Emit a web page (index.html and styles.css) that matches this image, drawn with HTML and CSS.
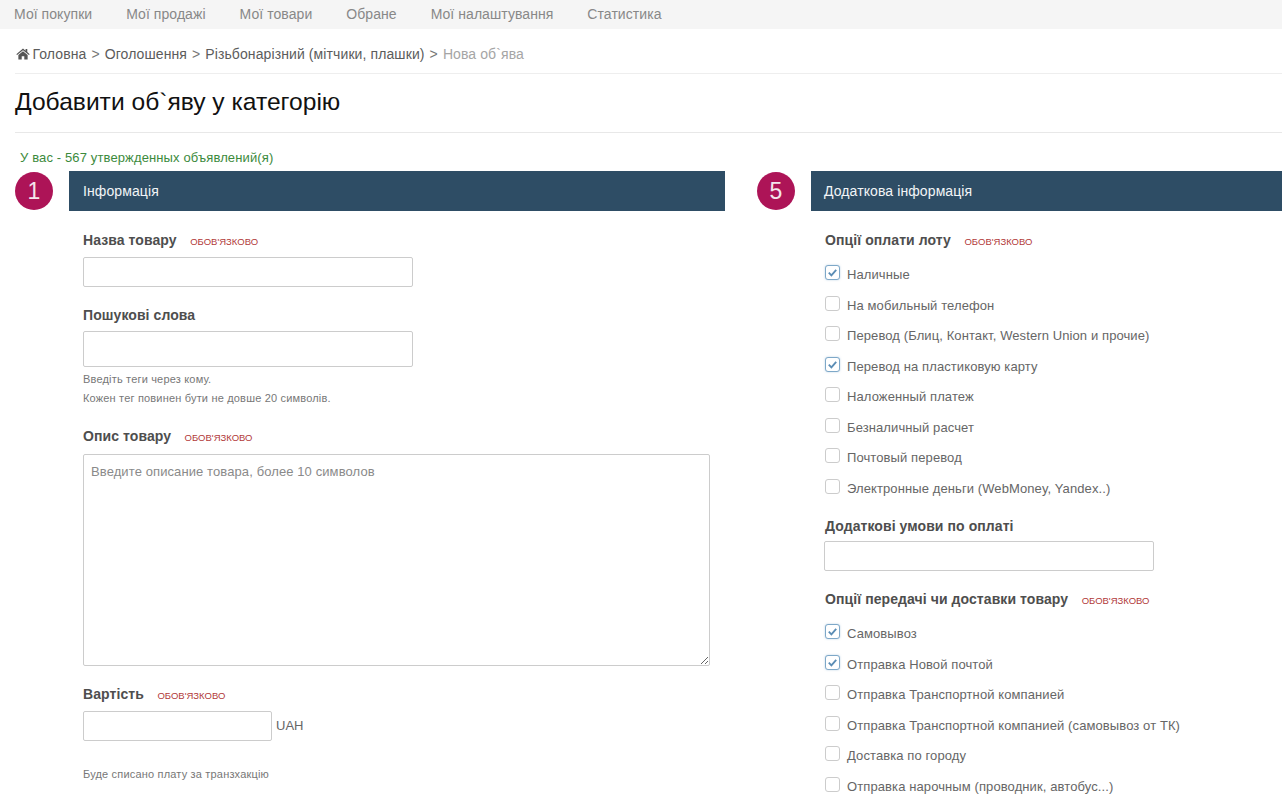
FILE: index.html
```html
<!DOCTYPE html>
<html lang="uk">
<head>
<meta charset="utf-8">
<title>Нова об`ява</title>
<link rel="stylesheet" href="styles.css">
</head>
<body>
<nav class="topnav">
  <a>Мої покупки</a><a>Мої продажі</a><a>Мої товари</a><a>Обране</a><a>Мої налаштування</a><a>Статистика</a>
</nav>
<main class="page">
  <div class="crumbs">
    <svg class="home" viewBox="0 0 16 14" width="14" height="12"><path d="M8 0.6 L0.2 7.2 L1.1 8.3 L8 2.6 L14.9 8.3 L15.8 7.2 L13 4.8 V1.2 H11 V3.1 Z M8 3.8 L2.6 8.3 V13.4 H6.5 V9.6 H9.5 V13.4 H13.4 V8.3 Z" fill="#555"/></svg>
    <span>Головна</span><i>&gt;</i><span>Оголошення</span><i>&gt;</i><span>Різьбонарізний (мітчики, плашки)</span><i>&gt;</i><span class="cur">Нова об`ява</span>
  </div>
  <h1>Добавити об`яву у категорію</h1>
  <p class="count">У вас - 567 утвержденных объявлений(я)</p>
  <div class="cols">
    <section class="col col-left">
      <div class="sec-head"><span class="num">1</span><h2>Інформація</h2></div>
      <div class="body">
        <div class="lbl lbl-name"><b>Назва товару</b><em>обов'язково</em></div>
        <input class="inp inp-name" type="text">
        <div class="lbl lbl-tags"><b>Пошукові слова</b></div>
        <input class="inp inp-tags" type="text">
        <p class="hint hint-a">Введіть теги через кому.</p>
        <p class="hint hint-b">Кожен тег повинен бути не довше 20 символів.</p>
        <div class="lbl lbl-desc"><b>Опис товару</b><em class="tight">обов'язково</em></div>
        <textarea class="area" placeholder="Введите описание товара, более 10 символов"></textarea>
        <div class="lbl lbl-price"><b>Вартість</b><em class="tight">обов'язково</em></div>
        <div class="price"><input class="inp inp-price" type="text"><span>UAH</span></div>
        <p class="hint hint-c">Буде списано плату за транзхакцію</p>
      </div>
    </section>
    <section class="col col-right">
      <div class="sec-head"><span class="num">5</span><h2>Додаткова інформація</h2></div>
      <div class="body">
        <div class="lbl lbl-pay"><b>Опції оплати лоту</b><em>обов'язково</em></div>
        <ul class="checks">
          <li><span class="box on"><svg viewBox="0 0 14 14"><path d="M3 7.2 L5.8 10 L11 4.2" fill="none" stroke="#5b8db5" stroke-width="2"/></svg></span>Наличные</li>
          <li><span class="box"></span>На мобильный телефон</li>
          <li><span class="box"></span>Перевод (Блиц, Контакт, Western Union и прочие)</li>
          <li><span class="box on"><svg viewBox="0 0 14 14"><path d="M3 7.2 L5.8 10 L11 4.2" fill="none" stroke="#5b8db5" stroke-width="2"/></svg></span>Перевод на пластиковую карту</li>
          <li><span class="box"></span>Наложенный платеж</li>
          <li><span class="box"></span>Безналичный расчет</li>
          <li><span class="box"></span>Почтовый перевод</li>
          <li><span class="box"></span>Электронные деньги (WebMoney, Yandex..)</li>
        </ul>
        <div class="lbl lbl-terms"><b>Додаткові умови по оплаті</b></div>
        <input class="inp inp-name" type="text">
        <div class="lbl lbl-ship"><b>Опції передачі чи доставки товару</b><em>обов'язково</em></div>
        <ul class="checks">
          <li><span class="box on"><svg viewBox="0 0 14 14"><path d="M3 7.2 L5.8 10 L11 4.2" fill="none" stroke="#5b8db5" stroke-width="2"/></svg></span>Самовывоз</li>
          <li><span class="box on"><svg viewBox="0 0 14 14"><path d="M3 7.2 L5.8 10 L11 4.2" fill="none" stroke="#5b8db5" stroke-width="2"/></svg></span>Отправка Новой почтой</li>
          <li><span class="box"></span>Отправка Транспортной компанией</li>
          <li><span class="box"></span>Отправка Транспортной компанией (самовывоз от ТК)</li>
          <li><span class="box"></span>Доставка по городу</li>
          <li><span class="box"></span>Отправка нарочным (проводник, автобус...)</li>
        </ul>
      </div>
    </section>
  </div>
</main>
</body>
</html>
```
FILE: styles.css
```css
* { box-sizing: border-box; }
html, body { margin: 0; height: 800px; overflow: hidden; background: #fff; }
body { font-family: "Liberation Sans", Arial, sans-serif; font-size: 13px; color: #555; }

.topnav { display: flex; gap: 34px; height: 29px; padding: 0 0 1px 14px; background: #f5f5f5; align-items: center; font-size: 14px; letter-spacing: 0.06px; color: #888; }

.page { padding-left: 15px; width: 1330px; }
.crumbs { display: flex; align-items: center; height: 45px; border-bottom: 1px solid #eee; font-size: 14px; letter-spacing: 0.1px; color: #5c5c5c; width: 1315px; padding-top: 5px; padding-left: 1px; }
.crumbs .home { margin-right: 2.5px; }
.crumbs i { font-style: normal; margin: 0 5px; color: #777; font-size: 14px; }
.crumbs .cur { color: #a5a5a5; }

h1 { margin: 0; height: 59px; line-height: 55px; font-size: 24.6px; font-weight: 400; color: #111; border-bottom: 1px solid #e8e8e8; width: 1315px; }
.count { margin: 17px 0 0 5px; height: 21px; line-height: 15px; font-size: 13px; letter-spacing: 0.13px; color: #3c8a3c; }

.cols { display: flex; gap: 32px; }
.col-left { width: 710px; }
.col-right { width: 560px; }
.sec-head { display: flex; gap: 16px; align-items: center; height: 40px; }
.num { flex: none; width: 38px; height: 38px; border-radius: 50%; background: #ad1457; color: #f4e6ec; font-size: 23px; display: flex; align-items: center; justify-content: center; }
.sec-head h2 { flex: 1; margin: 0; height: 40px; line-height: 40px; padding-left: 14px; font-size: 14px; letter-spacing: 0.1px; font-weight: 400; color: #f2f5f7; background: #2e4d65; }
.col-right .sec-head h2 { padding-left: 13px; }

.body { padding-left: 68px; }
.lbl { display: flex; align-items: baseline; line-height: 18px; }
.lbl b { font-size: 14px; font-weight: 700; letter-spacing: 0.08px; color: #4e4e4e; }
.lbl em { font-style: normal; text-transform: uppercase; font-size: 9.5px; color: #b23a3a; margin-left: 13.5px; }
.lbl em.tight { margin-left: 13.5px; }
.lbl-name { margin-top: 20px; margin-bottom: 6px; }
.lbl-tags { margin-top: 19px; margin-bottom: 7px; }
.lbl-desc { margin-top: 22px; margin-bottom: 7px; }
.lbl-price { margin-top: 19px; margin-bottom: 6px; }
.lbl-pay { margin-top: 20px; margin-bottom: 0; }
.lbl-terms { margin-top: 14px; margin-bottom: 6px; }
.lbl-ship { margin-top: 18.6px; margin-bottom: 0; }

.inp { display: block; border: 1px solid #ccc; border-radius: 2px; background: #fff; padding: 0 6px; }
.col-right .inp { margin-left: -1px; }
.inp-name { width: 330px; height: 30px; }
.inp-tags { width: 330px; height: 36px; }
.inp-price { width: 189px; height: 30px; }
.area { display: block; width: 627px; height: 212px; border: 1px solid #ccc; border-radius: 2px; padding: 9px 7px; font: 13px "Liberation Sans", Arial, sans-serif; letter-spacing: 0.1px; resize: vertical; }
.area::placeholder { color: #8a8a8a; opacity: 1; }

.hint { margin: 0; font-size: 11px; line-height: 14px; color: #777; letter-spacing: 0.18px; }
.hint-a { margin-top: 5px; }
.hint-b { margin-top: 5px; }
.hint-c { margin-top: 26px; }

.price { display: flex; align-items: center; gap: 4px; }
.price span { font-size: 13px; color: #666; margin-top: -2px; }

.checks { list-style: none; margin: 8.4px 0 0; padding: 0; }
.checks li { display: flex; align-items: center; height: 30.5px; color: #666; font-size: 13px; letter-spacing: 0.1px; }
.box { flex: none; display: flex; width: 15px; height: 15px; margin: -4px 7px 0 0; border: 1px solid #ccc; border-radius: 3px; background: #fff; }
.box.on { border-color: #7ea8c8; box-shadow: 0 0 2px rgba(110, 160, 200, 0.5); }
.box svg { width: 13px; height: 13px; }
```
